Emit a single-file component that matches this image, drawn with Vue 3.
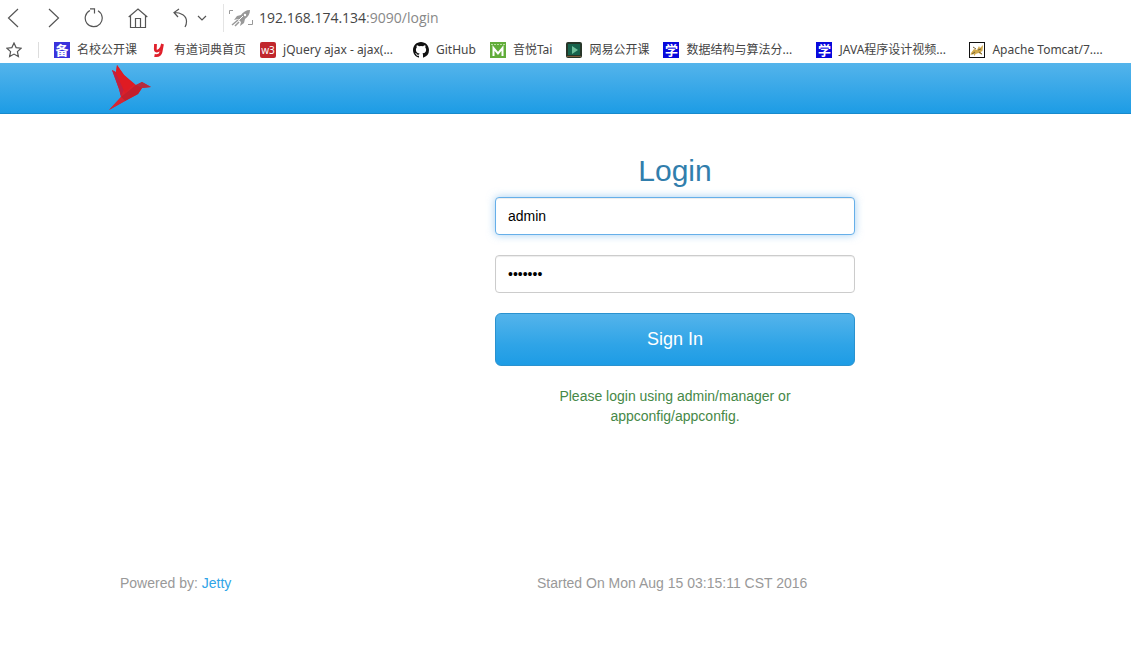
<script setup>
import { ref } from 'vue'

const username = ref('admin')
const password = ref('manager')

const bookmarks = [
  { icon: 'bei', label: '名校公开课' },
  { icon: 'youdao', label: '有道词典首页' },
  { icon: 'w3', label: 'jQuery ajax - ajax(...', wide: true },
  { icon: 'github', label: 'GitHub' },
  { icon: 'yyt', label: '音悦Tai' },
  { icon: 'netease', label: '网易公开课' },
  { icon: 'xue', label: '数据结构与算法分...', wide: true },
  { icon: 'xue', label: 'JAVA程序设计视频...', wide: true },
  { icon: 'tomcat', label: 'Apache Tomcat/7....', wide: true }
]
</script>

<template>
  <div class="window">
    <header class="chrome">
      <div class="toolbar">
        <button class="tool back" aria-label="Back">
          <svg width="12" height="20" viewBox="0 0 12 20"><path d="M11 1 1.500 10 11 19" /></svg>
        </button>
        <button class="tool forward" aria-label="Forward">
          <svg width="12" height="20" viewBox="0 0 12 20"><path d="M1 1 10.500 10 1 19" /></svg>
        </button>
        <button class="tool reload" aria-label="Reload">
          <svg width="20" height="20" viewBox="0 0 20 20"><path d="M14 2.800A8.500 8.500 0 1 1 6 2.500M6 .8H10.500V5.500" /></svg>
        </button>
        <button class="tool home" aria-label="Home">
          <svg width="20" height="20" viewBox="0 0 20 20"><path d="M.7 9 10 1l9.300 8M2.500 7.500v12h15v-12M7.500 19.500v-9h5v9" /></svg>
        </button>
        <button class="tool undo" aria-label="Undo">
          <svg width="15" height="20" viewBox="0 0 15 20"><path d="M6 1 1 4.500l4 4.500M1 4.500c7 0 12.500 3 12.500 9 0 2.500-.5 4-1.500 5.500" /></svg>
        </button>
        <button class="tool more" aria-label="More">
          <svg width="10" height="6" viewBox="0 0 10 6"><path d="m1 1 4 4 4-4" /></svg>
        </button>
        <div class="address">
          <svg class="rocket" width="24" height="18" viewBox="0 0 24 18">
            <path d="M.5 5V1.500H4M23.500 11v4.500H19" fill="none" stroke="#999" />
            <path d="M21 1c-4 0-7 2-9 5L8 7l-3 4 4-1 3 3-1 4 4-3 1-4c3-2 5-5 5-9z" fill="#999" />
            <path d="m3 16 6-5m-3 6 4-4" stroke="#999" stroke-width="1.500" />
            <circle cx="16" cy="6" r="1.200" fill="#fff" />
            <path d="m10 11 4-4" stroke="#fff" />
          </svg>
          <span class="url"><span class="host">192.168.174.134</span>:9090/login</span>
        </div>
      </div>

      <nav class="bookmarks" aria-label="Bookmarks">
        <button class="star" aria-label="Add bookmark">
          <svg width="16" height="16" viewBox="0 0 16 16"><path d="m8 1 2.100 4.600 5 .6-3.700 3.400 1 5L8 12.100l-4.400 2.500 1-5L.9 6.200l5-.6z" /></svg>
        </button>
        <a v-for="b in bookmarks" :key="b.label" href="#" class="bookmark" :class="{ wide: b.wide }">
          <span v-if="b.icon === 'bei'" class="favicon bei" aria-hidden="true">备</span>
          <span v-else-if="b.icon === 'xue'" class="favicon xue" aria-hidden="true">学</span>
          <span v-else-if="b.icon === 'w3'" class="favicon w3" aria-hidden="true">w3</span>
          <svg v-else-if="b.icon === 'youdao'" class="favicon" viewBox="0 0 16 16">
            <path d="M4.500 2 4.300 7q0 2.500 2.200 2Q9 8.500 10.500 5.500l1-3.500M11.500 2 10 10q-1 4.500-6.500 3.500" fill="none" stroke="#e0202b" stroke-width="2.800" />
          </svg>
          <svg v-else-if="b.icon === 'github'" class="favicon" viewBox="0 0 16 16">
            <path fill="#111" d="M8 0C3.580 0 0 3.580 0 8c0 3.540 2.290 6.530 5.470 7.590.4.070.55-.17.55-.38v-1.490c-2.230.48-2.690-.94-2.690-.94-.36-.92-.89-1.170-.89-1.170-.73-.5.060-.49.060-.49.8.060 1.230.83 1.230.83.71 1.230 1.870.87 2.330.67.070-.52.28-.87.5-1.070-1.780-.2-3.640-.89-3.640-3.950 0-.87.31-1.590.82-2.150-.08-.2-.36-1.020.08-2.120 0 0 .67-.21 2.200.82a7.600 7.600 0 0 1 4 0c1.530-1.040 2.200-.82 2.200-.82.44 1.100.16 1.920.08 2.120.51.56.82 1.270.82 2.150 0 3.070-1.870 3.750-3.650 3.950.29.25.54.73.54 1.480v2.200c0 .21.15.46.55.38A8 8 0 0 0 16 8c0-4.420-3.580-8-8-8z" />
          </svg>
          <svg v-else-if="b.icon === 'yyt'" class="favicon" viewBox="0 0 16 16">
            <rect width="16" height="16" fill="#62ad3b" />
            <path d="M1 2.500h14" stroke="#b9df9f" stroke-dasharray="2 1" />
            <path d="M3.500 14V6L8 11.500 12.500 6v8" fill="none" stroke="#fff" stroke-width="2" />
          </svg>
          <svg v-else-if="b.icon === 'netease'" class="favicon" viewBox="0 0 16 16">
            <rect width="16" height="16" rx="2" fill="#273629" />
            <rect x="2" y="2" width="12" height="11" fill="#17634c" />
            <path d="m6 4 6 4-6 4z" fill="#6fc09b" />
            <path d="M1 14.500h14" stroke="#7c5d3a" />
          </svg>
          <svg v-else class="favicon" viewBox="0 0 16 16">
            <rect x=".5" y=".5" width="15" height="15" fill="#fff" stroke="#111" />
            <path d="M2 11 5 7l3 1 2-4 1 2 3-3-.5 6-2 1 2 3-4-2-3 1-1 2-1-2-3 1z" fill="#d0a94b" />
            <path d="m4 5 3 2m2 1 3-1M3 12l3-2m4 0 3 2" stroke="#75633b" />
          </svg>
          <span>{{ b.label }}</span>
        </a>
      </nav>
    </header>

    <div class="banner">
      <svg class="bird" width="44" height="47" viewBox="0 0 44 47">
        <path d="M9 1 8 8 4 6l7 19 2 8L1 46l16-9 13-7 4-6 9-1-9-5-6 3L16 11z" fill="#d9222c" />
        <path d="m4 6 7 19 2 7 4-9-6-13z" fill="#c02040" />
        <path d="m9 1-1 8 9 20 9-9L16 11z" fill="#df1b22" />
        <path d="m13 33 4 4 13-7 4-6-6-3z" fill="#c41f2c" />
        <path d="M1 46 13 33l4 4z" fill="#d52634" />
        <path d="m28 21 6-3 9 5-9 1z" fill="#b42d40" />
      </svg>
    </div>

    <main class="content">
      <form class="login" @submit.prevent>
        <h2>Login</h2>
        <input v-model="username" class="field active" type="text" aria-label="Username" />
        <input v-model="password" class="field" type="password" aria-label="Password" />
        <button class="submit" type="submit">Sign In</button>
        <p class="hint">Please login using admin/manager or appconfig/appconfig.</p>
      </form>
    </main>

    <footer class="footer">
      <span>Powered by: <a href="#">Jetty</a></span>
      <span>Started On Mon Aug 15 03:15:11 CST 2016</span>
    </footer>
  </div>
</template>

<style>
body {
  margin: 0;
  background: #fff;
}
</style>

<style scoped>
.window {
  font: 14px/20px "Liberation Sans", Arial, sans-serif;
  color: #333;
}
.window * {
  box-sizing: border-box;
}
button {
  padding: 0;
  border: 0;
  background: none;
  font-family: inherit;
}
svg {
  display: block;
  flex: none;
}
.chrome {
  font-family: "Noto Sans", "Noto Sans CJK SC", sans-serif;
}
.toolbar {
  display: flex;
  align-items: center;
  height: 36px;
  padding-left: 7px;
}
.tool path,
.star path {
  fill: none;
  stroke: #555;
  stroke-width: 1.2;
}
.forward {
  margin-left: 29px;
}
.reload {
  margin-left: 24px;
}
.home {
  margin-left: 24px;
}
.undo {
  margin-left: 25px;
}
.more {
  margin-left: 9px;
}
.address {
  display: flex;
  flex: 1;
  align-items: center;
  gap: 6px;
  height: 28px;
  margin-left: 16px;
  padding-left: 5px;
  border-left: 1px solid #e4e4e4;
}
.url {
  font: 14px/20px "Open Sans", sans-serif;
  color: #888;
}
.host {
  color: #444;
}
.bookmarks {
  display: flex;
  align-items: center;
  gap: 14px;
  height: 27px;
  padding-left: 6px;
  font-size: 12px;
  white-space: nowrap;
}
.star {
  padding-right: 16px;
  border-right: 1px solid #ddd;
}
.bookmark {
  display: flex;
  flex: none;
  align-items: center;
  gap: 7px;
  color: #444;
  text-decoration: none;
}
.star + .bookmark {
  margin-left: 1px;
}
.wide {
  width: 139px;
}
.favicon {
  flex: none;
  width: 16px;
  height: 16px;
  overflow: hidden;
  color: #fff;
  font-weight: 700;
  font-size: 13px;
  line-height: 16px;
  text-align: center;
}
.bei {
  background: #3a32dc;
}
.xue {
  background: #0808dc;
}
.w3 {
  border-radius: 2px;
  background: #c1272d;
  font-weight: 400;
  font-size: 10px;
}
.banner {
  height: 51px;
  padding: 1px 0 0 108px;
  border-bottom: 1px solid #178acc;
  background: linear-gradient(#54b4eb, #1d9ce5);
}
.content {
  display: grid;
  grid-template-columns: 495px minmax(0, 360px) 1fr;
  padding-top: 40px;
}
.login {
  display: flex;
  grid-column: 2;
  flex-direction: column;
}
h2 {
  margin: 0 0 10px;
  color: #317eac;
  font-weight: 400;
  font-size: 30px;
  line-height: 33px;
  text-align: center;
}
.field {
  width: 100%;
  height: 38px;
  margin-bottom: 20px;
  padding: 8px 12px;
  border: 1px solid #ccc;
  border-radius: 4px;
  outline: 0;
  background: #fff;
  box-shadow: inset 0 1px 1px rgba(0, 0, 0, 0.075);
  color: #000;
  font: 14px/20px "Liberation Sans", Arial, sans-serif;
}
.active {
  border-color: #66afe9;
  box-shadow: inset 0 1px 1px rgba(0, 0, 0, 0.075), 0 0 8px rgba(102, 175, 233, 0.6);
}
.submit {
  height: 53px;
  border: 1px solid #2a92cf;
  border-radius: 6px;
  background: linear-gradient(#54b4eb, #2fa4e7 60%, #1d9ce5);
  color: #fff;
  font-size: 18px;
}
.hint {
  margin: 20px 60px 0;
  color: #468847;
  text-align: center;
}
.footer {
  display: grid;
  grid-template-columns: 417px 1fr;
  padding: 147px 0 20px 120px;
  color: #999;
}
.footer a {
  color: #2fa4e7;
  text-decoration: none;
}
</style>
